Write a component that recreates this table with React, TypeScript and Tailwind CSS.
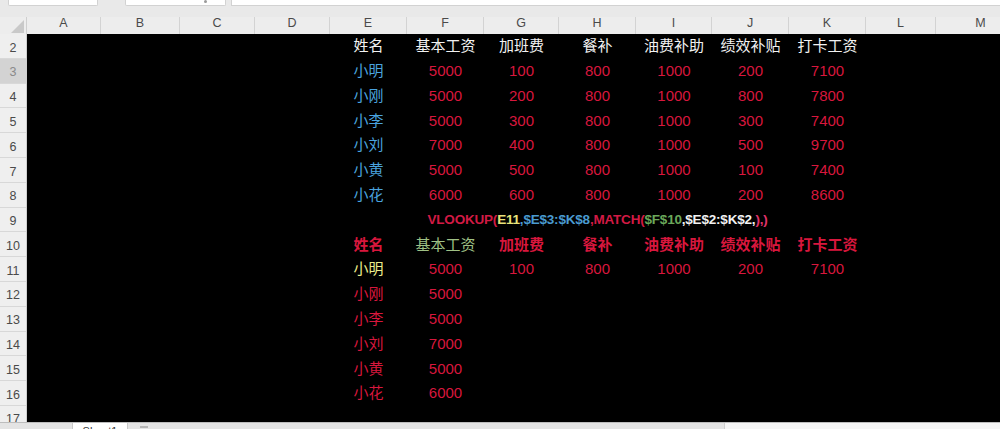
import React from "react";

const FONT = { fontFamily: '"Liberation Sans", "Noto Sans CJK SC", sans-serif' };

type Col = { key: string; w: string };

const cols: Col[] = [
  { key: "A", w: "w-[74px]" },
  { key: "B", w: "w-[79px]" },
  { key: "C", w: "w-[75px]" },
  { key: "D", w: "w-[75px]" },
  { key: "E", w: "w-[77px]" },
  { key: "F", w: "w-[77px]" },
  { key: "G", w: "w-[75px]" },
  { key: "H", w: "w-[77px]" },
  { key: "I", w: "w-[76px]" },
  { key: "J", w: "w-[77px]" },
  { key: "K", w: "w-[77px]" },
  { key: "L", w: "w-[70px]" },
  { key: "M", w: "w-[90px]" },
];

const RED = "text-[#d8173d]";
const BLUE = "text-[#4aa3df]";

type Cell = { text: React.ReactNode; color: string; bold?: boolean };

const headers = ["姓名", "基本工资", "加班费", "餐补", "油费补助", "绩效补贴", "打卡工资"];
const people: [string, number[]][] = [
  ["小明", [5000, 100, 800, 1000, 200, 7100]],
  ["小刚", [5000, 200, 800, 1000, 800, 7800]],
  ["小李", [5000, 300, 800, 1000, 300, 7400]],
  ["小刘", [7000, 400, 800, 1000, 500, 9700]],
  ["小黄", [5000, 500, 800, 1000, 100, 7400]],
  ["小花", [6000, 600, 800, 1000, 200, 8600]],
];
const dataCols = ["E", "F", "G", "H", "I", "J", "K"];

function Formula() {
  return (
    <span className="whitespace-nowrap text-[13.5px] font-bold tracking-[-0.2px]">
      <span className="text-[#d21a44]">VLOOKUP(</span>
      <span className="text-[#e8e27a]">E11</span>
      <span className="text-[#4a9bd0]">,$E$3:$K$8</span>
      <span className="text-[#d21a44]">,MATCH(</span>
      <span className="text-[#6aa85a]">$F$10</span>
      <span className="text-[#f2f2f2]">,$E$2:$K$2,</span>
      <span className="text-[#e0336a]">),)</span>
    </span>
  );
}

function buildRows(): Record<number, Record<string, Cell>> {
  const rows: Record<number, Record<string, Cell>> = {};
  rows[2] = {};
  headers.forEach((h, i) => (rows[2][dataCols[i]] = { text: h, color: "text-[#f2f2f2]" }));
  people.forEach(([name, vals], r) => {
    const row: Record<string, Cell> = { E: { text: name, color: BLUE } };
    vals.forEach((v, i) => (row[dataCols[i + 1]] = { text: v, color: RED }));
    rows[3 + r] = row;
  });
  rows[9] = { H: { text: <Formula />, color: "" } };
  rows[10] = {};
  headers.forEach(
    (h, i) =>
      (rows[10][dataCols[i]] = {
        text: h,
        color: i === 1 ? "text-[#9fc185]" : RED,
        bold: i !== 1,
      })
  );
  rows[11] = { E: { text: "小明", color: "text-[#ecec8c]" } };
  people[0][1].forEach((v, i) => (rows[11][dataCols[i + 1]] = { text: v, color: RED }));
  people.slice(1).forEach(([name, vals], r) => {
    rows[12 + r] = {
      E: { text: name, color: RED },
      F: { text: vals[0], color: RED },
    };
  });
  return rows;
}

export default function App() {
  const rows = buildRows();
  const rowNums = Array.from({ length: 16 }, (_, i) => i + 2);

  return (
    <div className="w-[1000px] h-[429px] overflow-hidden bg-[#e9e9e9] flex flex-col" style={FONT}>
      {/* formula bar remnants */}
      <div className="h-[17px] shrink-0 flex items-start">
        <div className="ml-[8px] w-[90px] h-[6px] bg-white border border-t-0 border-[#d2d2d2] rounded-b-[2px]" />
        <div className="ml-[27px] w-[101px] h-[6px] bg-white border border-t-0 border-[#d2d2d2] rounded-b-[2px] relative">
          <div className="absolute right-[18px] top-0 w-[3px] h-[3px] bg-[#9a9a9a] rounded-full" />
        </div>
        <div className="ml-[5px] flex-1 h-[6px] bg-white border border-t-0 border-r-0 border-[#d2d2d2]" />
      </div>

      {/* column header */}
      <div className="h-[17px] shrink-0 flex bg-[#ededed]">
        <div className="w-[27px] shrink-0 relative border-r border-[#cfcfcf]">
          <div className="absolute right-[2px] bottom-[1px] w-0 h-0 border-l-[13px] border-l-transparent border-b-[13px] border-b-[#c9c9c9]" />
        </div>
        {cols.map((c) => (
          <div
            key={c.key}
            className={`${c.w} shrink-0 flex items-end justify-center pb-[1px] text-[12.5px] text-[#4a4a4a] border-r border-[#d3d3d3]`}
          >
            {c.key}
          </div>
        ))}
      </div>

      {/* grid */}
      <div className="h-[389px] shrink-0 flex overflow-hidden border-b border-[#bdbdbd]">
        <div className="w-[27px] shrink-0 flex flex-col bg-[#efefef] border-r border-[#cfcfcf]">
          {rowNums.map((n) => (
            <div
              key={n}
              className={`h-[24.8px] shrink-0 flex items-center justify-center pt-[4px] text-[12.5px] border-b border-[#d8d8d8] ${
                n === 3 ? "bg-[#d3d3d3] text-[#8a8a8a]" : "text-[#4a4a4a]"
              }`}
            >
              {n}
            </div>
          ))}
        </div>
        <div className="flex-1 flex flex-col bg-black">
          {rowNums.map((n) => (
            <div key={n} className="h-[24.8px] shrink-0 flex">
              {cols.map((c) => {
                const cell = rows[n]?.[c.key];
                return (
                  <div
                    key={c.key}
                    className={`${c.w} shrink-0 flex items-center justify-center whitespace-nowrap text-[15px] ${
                      cell?.color ?? ""
                    } ${cell?.bold ? "font-bold" : ""}`}
                  >
                    {cell?.text}
                  </div>
                );
              })}
            </div>
          ))}
        </div>
      </div>

      {/* sheet tabs */}
      <div className="flex-1 flex items-start bg-[#e4e4e4] overflow-hidden">
        <div className="ml-[72px] w-[56px] h-[12px] bg-white border-x border-[#c9c9c9] text-[11px] text-[#333] text-center leading-[12px] pt-[2px]">
          Sheet1
        </div>
        <div className="ml-[12px] w-[8px] h-[2px] mt-[3px] bg-[#b5b5b5]" />
        <div className="ml-auto w-[276px] h-full bg-[#f5f5f5] border-l border-[#cfcfcf]" />
      </div>
    </div>
  );
}
